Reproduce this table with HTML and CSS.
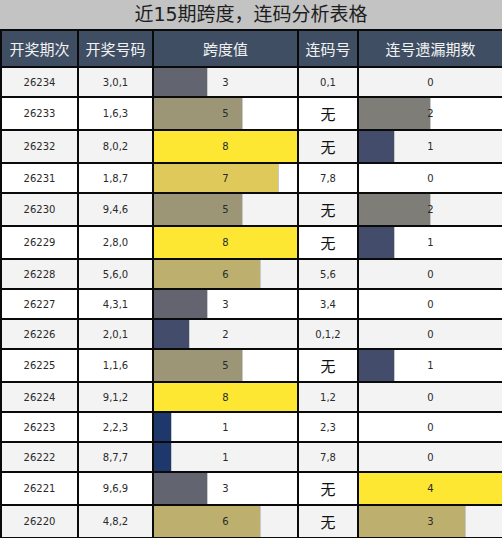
FILE: index.html
```html
<!DOCTYPE html>
<html lang="zh">
<head>
<meta charset="utf-8">
<title>近15期跨度，连码分析表格</title>
<link rel="stylesheet" href="styles.css">
</head>
<body>
<div class="title">近15期跨度，连码分析表格</div>
<table class="grid">
<colgroup><col class="c-a"><col class="c-b"><col class="c-c"><col class="c-d"><col class="c-e"></colgroup>
<thead>
<tr><th>开奖期次</th><th>开奖号码</th><th>跨度值</th><th>连码号</th><th>连号遗漏期数</th></tr>
</thead>
<tbody>
<tr class="odd"><td>26234</td><td>3,0,1</td><td class="barcell"><span class="bar s3" style="width:37.5%"></span><span class="val">3</span></td><td>0,1</td><td class="barcell"><span class="val">0</span></td></tr>
<tr class="tall"><td>26233</td><td>1,6,3</td><td class="barcell"><span class="bar s5" style="width:62.5%"></span><span class="val">5</span></td><td class="none">无</td><td class="barcell"><span class="bar m2" style="width:50%"></span><span class="val">2</span></td></tr>
<tr class="odd tall"><td>26232</td><td>8,0,2</td><td class="barcell"><span class="bar s8" style="width:100%"></span><span class="val">8</span></td><td class="none">无</td><td class="barcell"><span class="bar m1" style="width:25%"></span><span class="val">1</span></td></tr>
<tr><td>26231</td><td>1,8,7</td><td class="barcell"><span class="bar s7" style="width:87.5%"></span><span class="val">7</span></td><td>7,8</td><td class="barcell"><span class="val">0</span></td></tr>
<tr class="odd tall"><td>26230</td><td>9,4,6</td><td class="barcell"><span class="bar s5" style="width:62.5%"></span><span class="val">5</span></td><td class="none">无</td><td class="barcell"><span class="bar m2" style="width:50%"></span><span class="val">2</span></td></tr>
<tr class="tall"><td>26229</td><td>2,8,0</td><td class="barcell"><span class="bar s8" style="width:100%"></span><span class="val">8</span></td><td class="none">无</td><td class="barcell"><span class="bar m1" style="width:25%"></span><span class="val">1</span></td></tr>
<tr class="odd"><td>26228</td><td>5,6,0</td><td class="barcell"><span class="bar s6" style="width:75%"></span><span class="val">6</span></td><td>5,6</td><td class="barcell"><span class="val">0</span></td></tr>
<tr><td>26227</td><td>4,3,1</td><td class="barcell"><span class="bar s3" style="width:37.5%"></span><span class="val">3</span></td><td>3,4</td><td class="barcell"><span class="val">0</span></td></tr>
<tr class="odd"><td>26226</td><td>2,0,1</td><td class="barcell"><span class="bar s2" style="width:25%"></span><span class="val">2</span></td><td>0,1,2</td><td class="barcell"><span class="val">0</span></td></tr>
<tr class="tall"><td>26225</td><td>1,1,6</td><td class="barcell"><span class="bar s5" style="width:62.5%"></span><span class="val">5</span></td><td class="none">无</td><td class="barcell"><span class="bar m1" style="width:25%"></span><span class="val">1</span></td></tr>
<tr class="odd"><td>26224</td><td>9,1,2</td><td class="barcell"><span class="bar s8" style="width:100%"></span><span class="val">8</span></td><td>1,2</td><td class="barcell"><span class="val">0</span></td></tr>
<tr><td>26223</td><td>2,2,3</td><td class="barcell"><span class="bar s1" style="width:12.5%"></span><span class="val">1</span></td><td>2,3</td><td class="barcell"><span class="val">0</span></td></tr>
<tr class="odd"><td>26222</td><td>8,7,7</td><td class="barcell"><span class="bar s1" style="width:12.5%"></span><span class="val">1</span></td><td>7,8</td><td class="barcell"><span class="val">0</span></td></tr>
<tr class="tall"><td>26221</td><td>9,6,9</td><td class="barcell"><span class="bar s3" style="width:37.5%"></span><span class="val">3</span></td><td class="none">无</td><td class="barcell"><span class="bar m4" style="width:100%"></span><span class="val">4</span></td></tr>
<tr class="odd tall"><td>26220</td><td>4,8,2</td><td class="barcell"><span class="bar s6" style="width:75%"></span><span class="val">6</span></td><td class="none">无</td><td class="barcell"><span class="bar m3" style="width:75%"></span><span class="val">3</span></td></tr>
</tbody>
</table>
</body>
</html>
```
FILE: styles.css
```css
html, body {
  margin: 0;
  padding: 0;
  background: #ffffff;
}
body {
  width: 502px;
  font-family: "DejaVu Sans", "Noto Sans CJK SC", sans-serif;
}
.title {
  height: 29px;
  background: #c3c3c3;
  color: #1e1e1e;
  font-size: 19px;
  line-height: 29px;
  text-align: center;
}
.grid {
  width: 502px;
  border-collapse: collapse;
  table-layout: fixed;
}
.c-a { width: 77px; }
.c-b { width: 75px; }
.c-c { width: 145px; }
.c-d { width: 60px; }
.c-e { width: 145px; }
.grid th, .grid td {
  border: 2px solid #0a0a0a;
  padding: 0;
  text-align: center;
  vertical-align: middle;
}
.grid th {
  height: 35px;
  background: #3f4e63;
  color: #f2f2f2;
  font-family: "Noto Sans CJK SC", sans-serif;
  font-weight: normal;
  font-size: 15px;
}
.grid td {
  height: 28px;
  color: #2a2a2a;
  font-size: 10px;
  background: #ffffff;
}
.grid tr.odd td { background: #f3f3f3; }
.grid tr.tall td { height: 31px; }
.grid td.none {
  font-family: "Noto Sans CJK SC", sans-serif;
  font-size: 15px;
  color: #111;
}
.barcell {
  position: relative;
}
.bar {
  position: absolute;
  left: 0;
  top: 0;
  bottom: 0;
  box-sizing: border-box;
  border-right: 1px solid #c9c9c9;
}
.val {
  position: relative;
}
.s1 { background: #1f386b; }
.s2 { background: #434c6b; }
.s3 { background: #62656f; }
.s5 { background: #9c9677; }
.s6 { background: #bdb06f; }
.s7 { background: #dfc95a; }
.s8 { background: #fde733; border-right: none; }
.m1 { background: #434c6b; }
.m2 { background: #7f7d78; }
.m3 { background: #bdb06f; }
.m4 { background: #fde733; border-right: none; }
```
